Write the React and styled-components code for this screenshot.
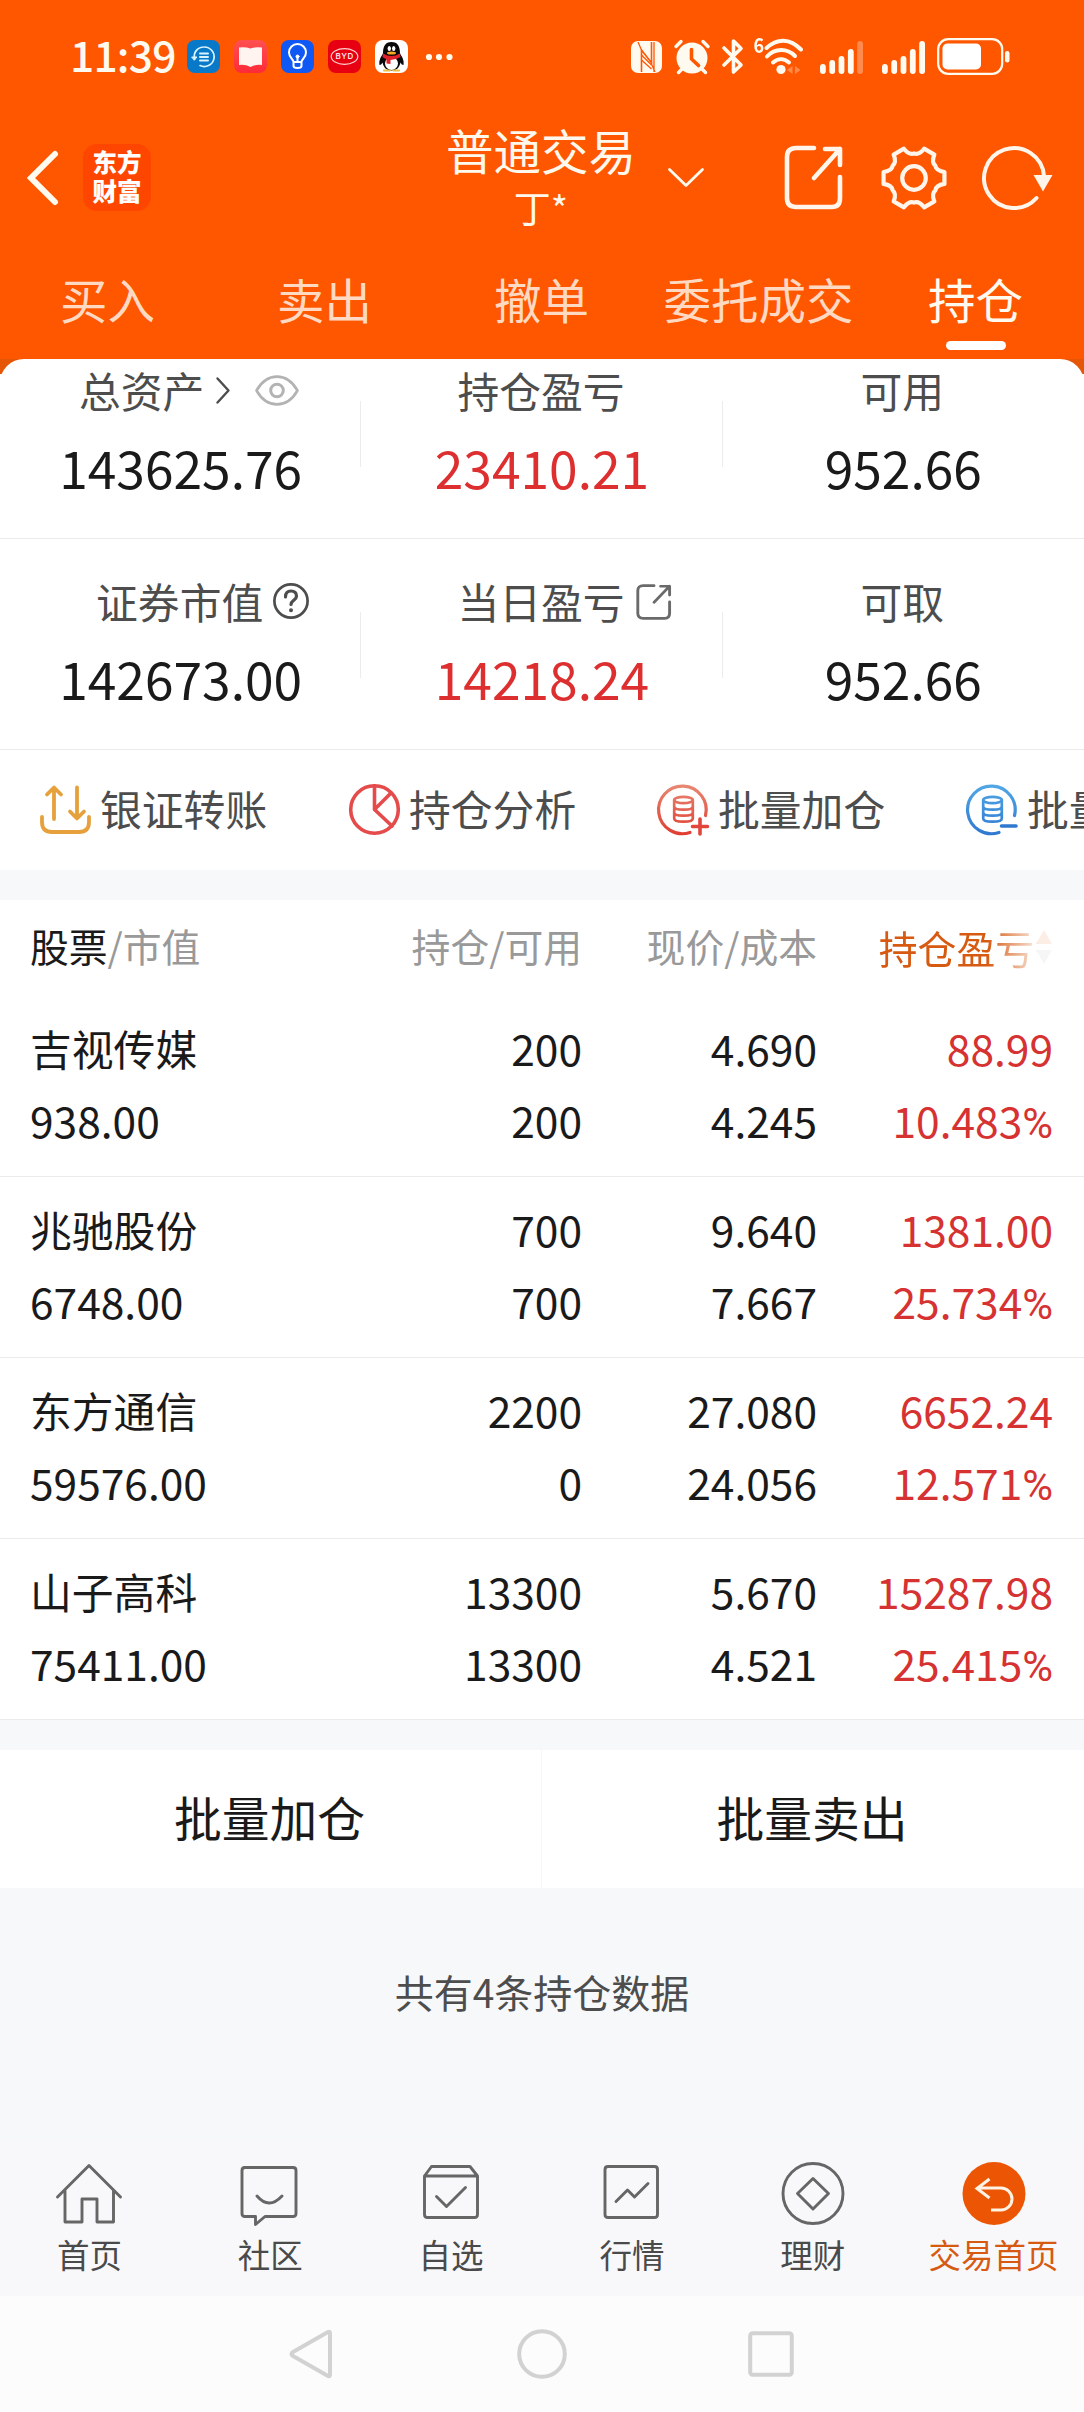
import React from "react";
import styled, { createGlobalStyle } from "styled-components";

const GlobalStyle = createGlobalStyle`
  * { box-sizing: border-box; }
  body {
    margin: 0;
    background: #f7f8fa;
    font-family: "Noto Sans CJK SC", "Noto Sans", sans-serif;
    color: #1a1a1a;
  }
`;

const Screen = styled.div`
  width: 1084px;
  height: 2412px;
  display: flex;
  flex-direction: column;
  overflow: hidden;
  background: #f7f8fa;
`;

const Icon = styled.svg`
  display: block;
  flex: none;
  width: ${(p) => p.$w}px;
  height: ${(p) => p.$h}px;
  margin-left: ${(p) => p.$ml || 0}px;
  overflow: visible;
  fill: none;
  stroke-linecap: round;
  stroke-linejoin: round;
`;

/* ---------- header ---------- */
const Header = styled.header`
  height: 359px;
  flex: none;
  background: #ff5600;
  color: #fffaf0;
`;

const StatusBar = styled.div`
  height: 112px;
  display: flex;
  align-items: center;
  padding: 1px 74px 0 70px;
`;

const Clock = styled.span`
  width: 117px;
  font-size: 42.5px;
  line-height: 50px;
  font-weight: 500;
  letter-spacing: -0.8px;
  white-space: nowrap;
  margin-top: -5px;
`;

const AppBadge = styled.span`
  width: 33px;
  height: 33px;
  flex: none;
  margin-right: 14px;
  border-radius: 8px;
  overflow: hidden;
  background: ${(p) => p.$bg};
`;

const StatusRight = styled.div`
  display: flex;
  align-items: center;
  margin-left: auto;
`;

const TitleBar = styled.div`
  height: 131px;
  display: grid;
  grid-template-columns: 440px 204px 1fr;
  align-items: center;
`;

const Brand = styled.div`
  display: flex;
  align-items: center;
  padding-left: 27px;
`;

const Logo = styled.div`
  width: 68px;
  height: 67px;
  margin-left: 25px;
  border-radius: 14px;
  background: #ff4600;
  display: flex;
  flex-direction: column;
  align-items: center;
  justify-content: center;
  color: #fff;
  font-size: 24.5px;
  line-height: 29.5px;
  font-weight: 900;
  padding-bottom: 3px;
`;

const Account = styled.div`
  text-align: center;
  color: #fff8ec;
  padding-right: 2px;
`;

const AccountType = styled.div`
  font-size: 47.5px;
  line-height: 60px;
  margin-top: -5px;
`;

const AccountName = styled.div`
  font-size: 37px;
  line-height: 48px;
  margin-top: 3px;
`;

const Tools = styled.div`
  display: flex;
  align-items: center;
  padding-left: 24px;
`;

const Tabs = styled.nav`
  height: 116px;
  display: grid;
  grid-template-columns: repeat(5, 1fr);
  margin-left: -1px;
`;

const Tab = styled.div`
  display: flex;
  flex-direction: column;
  align-items: center;
  padding-top: 24px;
  font-size: 47.5px;
  line-height: 64px;
  color: ${(p) => (p.$active ? "#fffaf0" : "#ffd9c2")};
  &::after {
    content: "";
    width: 60px;
    height: 9px;
    margin-top: 10px;
    border-radius: 5px;
    background: ${(p) => (p.$active ? "#fff" : "transparent")};
  }
`;

/* ---------- summary ---------- */
const SheetBackdrop = styled.div`
  flex: none;
  background: linear-gradient(#e65607 15px, #fff 15px);
`;

const Sheet = styled.section`
  background: #fff;
  border-radius: 24px 24px 0 0;
`;

const SummaryRow = styled.div`
  height: ${(p) => p.$height}px;
  display: grid;
  grid-template-columns: repeat(3, 1fr);
  align-items: end;
  border-bottom: 1px solid #ebebeb;
`;

const Stat = styled.div`
  height: 178px;
  padding-top: 1px;
  display: flex;
  flex-direction: column;
  align-items: center;
  background: ${(p) =>
    p.$last ? "none" : "linear-gradient(#ececec, #ececec) right 0 top 41px / 1px 66px no-repeat"};
`;

const StatLabel = styled.div`
  position: relative;
  display: flex;
  align-items: center;
  padding-left: ${(p) => p.$shift || 0}px;
  font-size: 41.8px;
  line-height: 58px;
  color: #4d4d4d;
  margin-left: -2px;
`;

const LabelAside = styled.span`
  position: absolute;
  left: 100%;
  top: ${(p) => p.$top}px;
`;

const StatValue = styled.div`
  margin-top: 15px;
  font-size: 51.5px;
  line-height: 66px;
  color: ${(p) => (p.$up ? "#dd2f2f" : "#1a1a1a")};
`;

const Shortcuts = styled.div`
  height: 120px;
  display: flex;
  overflow: hidden;
  padding-left: 40px;
`;

const Shortcut = styled.div`
  width: 309px;
  flex: none;
  display: flex;
  align-items: center;
  padding-bottom: 1px;
  font-size: 41.8px;
  line-height: 58px;
  color: #4d4d4d;
  white-space: nowrap;
  span { margin: -4px 0 0 9px; }
`;

/* ---------- holdings ---------- */
const Band = styled.div`
  height: ${(p) => p.$height}px;
  flex: none;
  background: #f7f8fa;
`;

const Holdings = styled.section`
  flex: none;
  background: #fff;
`;

const HeadRow = styled.div`
  height: 96px;
  display: grid;
  grid-template-columns: 253px 299px 235px 235px;
  padding: 0 32px 0 30px;
  line-height: 91px;
  font-size: 38.8px;
  color: #999;
`;

const HeadCell = styled.div`
  text-align: ${(p) => (p.$first ? "left" : "right")};
  white-space: nowrap;
  b { font-weight: 400; color: #1a1a1a; }
`;

const SortHead = styled.div`
  display: flex;
  align-items: center;
  justify-content: flex-end;
  height: 93px;
  line-height: 90px;
  color: #d65a12;
  mask-image: linear-gradient(to right, #000 170px, rgba(0, 0, 0, 0.1) 222px);
`;

const Holding = styled.div`
  height: 181px;
  display: grid;
  grid-template-columns: 253px 299px 235px 236px;
  grid-template-rows: 72px 72px;
  padding: 16px 31px 0 30px;
  border-bottom: 1px solid #ebebeb;
  line-height: 72px;
`;

const Cell = styled.div`
  text-align: ${(p) => (p.$left ? "left" : "right")};
  color: ${(p) => (p.$up ? "#d63232" : "#1a1a1a")};
  font-size: ${(p) => (p.$name ? 41.8 : 42.5)}px;
  white-space: nowrap;
`;

const Percent = styled.span`
  font-family: Roboto, sans-serif;
  font-size: 42px;
`;

const Batch = styled.div`
  height: 138px;
  flex: none;
  display: grid;
  grid-template-columns: 541px 543px;
  background: #fff;
`;

const BatchButton = styled.div`
  text-align: center;
  font-size: 47.8px;
  line-height: 133px;
  padding-right: 2px;
  & + & { border-left: 1px solid #f7f7f7; }
`;

const Summary = styled.p`
  margin: 0;
  height: 254px;
  flex: none;
  padding-top: 75px;
  text-align: center;
  font-size: 39px;
  line-height: 56px;
  color: #4d4d4d;
`;

/* ---------- bottom bars ---------- */
const BottomTabs = styled.nav`
  height: 154px;
  flex: none;
  display: grid;
  grid-template-columns: repeat(6, 1fr);
  background: #f8f8fa;
  margin-left: -1px;
`;

const BottomTab = styled.div`
  display: flex;
  flex-direction: column;
  align-items: center;
  padding-top: 20px;
  font-size: 32.5px;
  line-height: 44px;
  white-space: nowrap;
  color: ${(p) => (p.$active ? "#d65a12" : "#4a4a4a")};
  span { margin-top: 6px; }
`;

const SystemNav = styled.div`
  flex: 1;
  display: flex;
  align-items: center;
  padding: 0 0 0 289px;
  background: #fcfcfc;
`;

/* ---------- drawings ---------- */
const gearPath = (() => {
  const pt = (r, a) => {
    const t = (a * Math.PI) / 180;
    return `${(33 + r * Math.cos(t)).toFixed(2)} ${(32 + r * Math.sin(t)).toFixed(2)}`;
  };
  let d = "";
  for (let a = 0; a < 360; a += 60) {
    d += `${a ? "L" : "M"}${pt(31, a - 11)} L${pt(31, a + 11)} C${pt(25, a + 16)} ${pt(23.6, a + 22)} ${pt(24.6, a + 30)} C${pt(23.6, a + 38)} ${pt(25, a + 44)} ${pt(31, a + 49)} `;
  }
  return d + "Z";
})();

const Nfc = () => (
  <Icon $w={31} $h={32} viewBox="0 0 31 32">
    <rect width="31" height="32" rx="7" fill="#fffaf0" />
    <path d="M10.500 31V9L21 22.500M20.500 1v22" stroke="#ff5600" strokeWidth="1.600" strokeLinecap="butt" />
    <path d="M7 1l3.500 8M24 31l-3.500-8M10.500 14l10 10M10.500 19l10 9M23 1v30" stroke="#ff5600" strokeWidth="1.300" strokeLinecap="butt" />
  </Icon>
);

const Alarm = () => (
  <Icon $w={36} $h={34} $ml={12} viewBox="0 0 36 34">
    <circle cx="18" cy="18" r="15.500" fill="#fffaf0" />
    <path d="M2 6.500l5-5M34 6.500l-5-5M8 29l-3.500 3.500M28 29l3.500 3.500" stroke="#fffaf0" strokeWidth="3.400" />
    <path d="M17.500 9.500v9.500l7 6.500" stroke="#ff5600" strokeWidth="3.600" />
  </Icon>
);

const Bluetooth = () => (
  <Icon $w={22} $h={35} $ml={12} viewBox="0 0 22 35">
    <path d="M2 9l17 17-7.500 7V2L19 9.500 2 26" stroke="#fffaf0" strokeWidth="3.600" />
  </Icon>
);

const WifiLabel = styled.span`
  font-size: 20px;
  line-height: 20px;
  font-weight: 700;
  margin: -24px 0 0 9px;
  transform: scaleX(0.9);
`;

const Wifi = () => (
  <Icon $w={38} $h={35} viewBox="0 0 38 35">
    <path d="M1.500 9C12-1 25-1 36 10.500M2 17.500C10 9 22 9 30 17M8 23.500c5-4.500 11-4.500 16 0" stroke="#fffaf0" strokeWidth="4" />
    <circle cx="16" cy="30.500" r="4.600" fill="#fffaf0" />
    <path d="M27.500 27v8L22 31zM30 27v8l5.500-4z" fill="#ff8a4d" />
  </Icon>
);

const Signal = ({ bars, ml }) => (
  <Icon $w={43} $h={34} $ml={ml} viewBox="0 0 43 34">
    {[10, 14, 18, 25, 33].map((h, i) => (
      <rect key={h} x={i * 9.3} y={34 - h} width="5.800" height={h} rx="2.900" fill={i < bars ? "#fffaf0" : "#ff8a4d"} />
    ))}
  </Icon>
);

const Battery = () => (
  <Icon $w={73} $h={37} $ml={12} viewBox="0 0 73 37">
    <rect x="1.200" y="1.200" width="64" height="34.600" rx="10" stroke="#fffaf0" strokeWidth="2.200" />
    <rect x="5.500" y="5.500" width="38.500" height="26" rx="5" fill="#fff" />
    <rect x="68" y="13" width="4.500" height="11.500" rx="2.200" fill="#fffaf0" />
  </Icon>
);

const HistoryBadge = () => (
  <AppBadge $bg="#0878c8">
    <Icon $w={33} $h={33} viewBox="0 0 33 33" stroke="#d9f4ff">
      <path d="M7.500 19C6 12 11 7 17 7a9.800 9.800 0 1 1-4 18.600" strokeWidth="1.700" />
      <path d="M5 17l5 0-2.500 3z" fill="#d9f4ff" strokeWidth="1" />
      <path d="M13 13.500h8M13 17h8M13 20.500h8" strokeWidth="2" />
    </Icon>
  </AppBadge>
);

const BookBadge = () => (
  <AppBadge $bg="linear-gradient(#ff5050, #ff2a38)">
    <Icon $w={33} $h={33} viewBox="0 0 33 33">
      <path d="M5 7.500Q11 6.500 16.500 8.500 22 6.500 28 7.500V25q-6-1-11.500 2Q11 24 5 25z" fill="#fff4f0" />
    </Icon>
  </AppBadge>
);

const BulbBadge = () => (
  <AppBadge $bg="#1058f4">
    <Icon $w={33} $h={33} viewBox="0 0 33 33" stroke="#fff" strokeWidth="2">
      <path d="M12.500 22c0-3-4.500-4-4.500-9.500a8.500 8.500 0 0 1 17 0c0 5.500-4.500 6.500-4.500 9.500zM12.500 22v4q0 2 4 2t4-2v-4M16.500 17v5" />
      <circle cx="16.500" cy="16.500" r="1.500" fill="#fff" strokeWidth="1" />
    </Icon>
  </AppBadge>
);

const BydText = styled.text`
  font: 600 8px Inter, sans-serif;
  letter-spacing: 0.5px;
  fill: #ffe3e3;
`;

const BydBadge = () => (
  <AppBadge $bg="#e60012">
    <Icon $w={33} $h={33} viewBox="0 0 33 33">
      <ellipse cx="16.500" cy="16.500" rx="13.300" ry="7.800" stroke="#ffd0d0" strokeWidth="1.200" />
      <BydText x="16.700" y="19.400" textAnchor="middle">BYD</BydText>
    </Icon>
  </AppBadge>
);

const PenguinBadge = () => (
  <AppBadge $bg="#fff">
    <Icon $w={33} $h={33} viewBox="0 0 33 33">
      <path d="M8 14C4.500 18 4 22 4.500 25c1.500 0 2.500-1.500 3-2.500 1 5 4 8 9 8s8-3 9-8c.5 1 1.500 2.500 3 2.500 .5-3 0-7-3.500-11z" fill="#0a0a0a" />
      <path d="M8 13C8 5 11.500 2 16.500 2S25 5 25 13l1 4H7z" fill="#0a0a0a" />
      <ellipse cx="16.500" cy="23.500" rx="6.500" ry="6.500" fill="#fff" />
      <path d="M8 13.500q8.500 5 17 0l.5 3.500q-5 3-10 3v4l-4-.5v-4L7.500 17z" fill="#e0202a" />
      <ellipse cx="14.300" cy="8.500" rx="1.700" ry="2.500" fill="#fff" />
      <ellipse cx="18.700" cy="8.500" rx="1.700" ry="2.500" fill="#fff" />
      <ellipse cx="16.500" cy="13" rx="4.500" ry="1.500" fill="#f5a623" />
      <path d="M9 30.500h5.500M18.500 30.500H24" stroke="#f0c040" strokeWidth="2.200" />
    </Icon>
  </AppBadge>
);

const ShareOut = ({ w, h, ml, color, sw }) => (
  <Icon $w={w} $h={h} $ml={ml} viewBox="0 0 60 65" preserveAspectRatio="none" stroke={color} strokeWidth={sw}>
    <path d="M30 3H12Q3 3 3 12v41q0 9 9 9h36q8 0 8-9V32" />
    <path d="M41 4h15v16M56 4L30 33" />
  </Icon>
);

const Eye = () => (
  <Icon $w={44} $h={31} $ml={25} viewBox="0 0 44 31" stroke="#b3b3b3" strokeWidth="2.600">
    <path d="M1.500 15.500C12-3 32-3 42.500 15.500 32 34 12 34 1.500 15.500z" />
    <circle cx="22" cy="15.500" r="6.300" strokeWidth="3" />
  </Icon>
);

const Help = () => (
  <Icon $w={36} $h={36} $ml={10} viewBox="0 0 36 36" stroke="#4d4d4d" strokeWidth="2.700">
    <circle cx="18" cy="18" r="16.600" />
    <path d="M12.500 14q0-6 5.500-6t5.500 5.200c0 4-5.500 4.300-5.500 8.300" strokeWidth="3.200" />
    <circle cx="18" cy="27.200" r="1" fill="#4d4d4d" strokeWidth="2" />
  </Icon>
);

const Transfer = () => (
  <Icon $w={51} $h={50} viewBox="0 0 51 50" stroke="#e6a03c" strokeWidth="3.800">
    <path d="M2 32v5q0 10 10 10h27q10 0 10-10v-5" />
    <path d="M14 34V3M7 9.500L14 2.500l7 7M37 2.500V33M30 26.500l7 7 7-7" />
  </Icon>
);

const Pie = () => (
  <Icon $w={51} $h={51} viewBox="0 0 51 51" stroke="#e54b4b" strokeWidth="3.600">
    <circle cx="25.500" cy="25.500" r="23.800" />
    <path d="M25.500 2v23.500L42 9M25.500 25.500L43 42" />
  </Icon>
);

const Stack = ({ minus }) => {
  const id = minus ? "stackBlue" : "stackRed";
  return (
    <Icon $w={51} $h={51} viewBox="0 0 51 51" stroke={`url(#${id})`} strokeWidth="3.200">
      <defs>
        <linearGradient id={id} gradientUnits="userSpaceOnUse" x1="0" y1="0" x2="0" y2="51">
          <stop offset="0" stopColor={minus ? "#52a8e6" : "#e88a74"} />
          <stop offset="1" stopColor={minus ? "#2f78d0" : "#e03c30"} />
        </linearGradient>
      </defs>
      <path d="M47.500 31.500A23.800 23.800 0 1 0 32 48.400" />
      <ellipse cx="25.500" cy="16" rx="9.300" ry="3.200" strokeWidth="2.700" />
      <path d="M16.200 16v18.500q0 3.200 9.300 3.200t9.300-3.200V16M16.200 22.500q0 3.200 9.300 3.200t9.300-3.200M16.200 28.500q0 3.200 9.300 3.200t9.300-3.200" strokeWidth="2.700" />
      <path d={minus ? "M34.500 42H49" : "M34.500 42.500H49.500M42 35v15"} stroke={minus ? "#2f78d0" : "#e2453a"} strokeWidth="3.600" />
    </Icon>
  );
};

const SortArrows = () => (
  <Icon $w={16} $h={36} $ml={2} viewBox="0 0 16 36">
    <path d="M8 1l8 14H0z" fill="#e65500" />
    <path d="M8 35l8-14H0z" fill="#aaa" />
  </Icon>
);

const line = { stroke: "#666", strokeWidth: 2.9 };
const bottomItems = [
  ["首页", <path key="a" {...line} d="M1.500 35L33 3.500 64.500 35M9 28.500V60h17V37h15v23h16.500V28.500" />],
  ["社区", <path key="a" {...line} d="M7 5.500h49q3 0 3 3v43q0 3-3 3H28l-9.500 8v-8H8q-3 0-3-3v-43q0-3 3-3zM20 34q12 14 25 0" />],
  ["自选", <path key="a" {...line} d="M6.500 14l7-9.500h38.500l7.500 9.500v38.500q0 3-3 3h-47q-3 0-3-3zM6.500 14h53M18.500 34.500L28.500 44.500 47.500 25.500" />],
  ["行情", <path key="a" {...line} d="M9 4.500h46.500q3 0 3 3v45q0 3-3 3H9q-3 0-3-3v-45q0-3 3-3zM17 39.500L28.500 28l7 7L49 21.500" />],
  ["理财", <g key="a" {...line}><circle cx="33" cy="31.500" r="30" /><path d="M33 16.500l15.500 15L33 47 17.500 31.500z" /></g>],
  ["交易首页", <g key="a"><circle cx="33" cy="31.500" r="31.500" fill="#eb5503" /><path d="M28.500 17L16 26.500 28.500 36M16 26h24a11 11 0 0 1 0 22H30" stroke="#fff3e4" strokeWidth="3" strokeLinecap="butt" strokeLinejoin="miter" /></g>],
];

const holdings = [
  ["吉视传媒", "200", "4.690", "88.99", "938.00", "200", "4.245", "10.483"],
  ["兆驰股份", "700", "9.640", "1381.00", "6748.00", "700", "7.667", "25.734"],
  ["东方通信", "2200", "27.080", "6652.24", "59576.00", "0", "24.056", "12.571"],
  ["山子高科", "13300", "5.670", "15287.98", "75411.00", "13300", "4.521", "25.415"],
];

export default function App() {
  return (
    <Screen>
      <GlobalStyle />
      <Header>
        <StatusBar>
          <Clock>11:39</Clock>
          <HistoryBadge />
          <BookBadge />
          <BulbBadge />
          <BydBadge />
          <PenguinBadge />
          <Icon $w={28} $h={8} $ml={3} viewBox="0 0 28 8">
            <g fill="#fffaf0"><circle cx="4" cy="4" r="3.100" /><circle cx="14" cy="4" r="3.100" /><circle cx="24.500" cy="4" r="3.100" /></g>
          </Icon>
          <StatusRight>
            <Nfc />
            <Alarm />
            <Bluetooth />
            <WifiLabel>6</WifiLabel>
            <Wifi />
            <Signal bars={4} ml={17} />
            <Signal bars={5} ml={19} />
            <Battery />
          </StatusRight>
        </StatusBar>
        <TitleBar>
          <Brand>
            <Icon $w={31} $h={54} viewBox="0 0 31 54" stroke="#fffaf0" strokeWidth="6">
              <path d="M28 3L4 27l24 24" strokeLinejoin="miter" />
            </Icon>
            <Logo><span>东方</span><span>财富</span></Logo>
          </Brand>
          <Account>
            <AccountType>普通交易</AccountType>
            <AccountName>丁*</AccountName>
          </Account>
          <Tools>
            <Icon $w={36} $h={19} viewBox="0 0 36 19" stroke="#fffaf0" strokeWidth="2.800">
              <path d="M1.500 1.500L18 17.500 34.500 1.500" />
            </Icon>
            <ShareOut w={60} h={65} ml={80} color="#fff5ea" sw={4.6} />
            <Icon $w={66} $h={64} $ml={37} viewBox="0 0 66 64" stroke="#fff5ea" strokeWidth="4.200">
              <path d={gearPath} />
              <circle cx="33" cy="32" r="11.800" />
            </Icon>
            <Icon $w={71} $h={65} $ml={35} viewBox="0 0 71 65" stroke="#fff5ea" strokeWidth="4">
              <path d="M54.500 53A30 30 0 1 1 62 31" />
              <path d="M51.500 30h19L61 46.500z" fill="#fff5ea" stroke="none" />
            </Icon>
          </Tools>
        </TitleBar>
        <Tabs>
          <Tab>买入</Tab>
          <Tab>卖出</Tab>
          <Tab>撤单</Tab>
          <Tab>委托成交</Tab>
          <Tab $active>持仓</Tab>
        </Tabs>
      </Header>

      <SheetBackdrop>
        <Sheet>
          <SummaryRow $height={180}>
            <Stat>
              <StatLabel $shift={19}>
                总资产
                <Icon $w={14} $h={27} $ml={12} viewBox="0 0 14 27" stroke="#4d4d4d" strokeWidth="2.400">
                  <path d="M1.500 1.500L12.500 13.500 1.500 25.500" />
                </Icon>
                <Eye />
              </StatLabel>
              <StatValue>143625.76</StatValue>
            </Stat>
            <Stat>
              <StatLabel>持仓盈亏</StatLabel>
              <StatValue $up>23410.21</StatValue>
            </Stat>
            <Stat $last>
              <StatLabel>可用</StatLabel>
              <StatValue>952.66</StatValue>
            </Stat>
          </SummaryRow>
          <SummaryRow $height={211}>
            <Stat>
              <StatLabel>
                证券市值
                <LabelAside $top={11}><Help /></LabelAside>
              </StatLabel>
              <StatValue>142673.00</StatValue>
            </Stat>
            <Stat>
              <StatLabel>
                当日盈亏
                <LabelAside $top={12}><ShareOut w={36} h={36} ml={11} color="#6a6a6a" sw={4.8} /></LabelAside>
              </StatLabel>
              <StatValue $up>14218.24</StatValue>
            </Stat>
            <Stat $last>
              <StatLabel>可取</StatLabel>
              <StatValue>952.66</StatValue>
            </Stat>
          </SummaryRow>
          <Shortcuts>
            <Shortcut><Transfer /><span>银证转账</span></Shortcut>
            <Shortcut><Pie /><span>持仓分析</span></Shortcut>
            <Shortcut><Stack /><span>批量加仓</span></Shortcut>
            <Shortcut><Stack minus /><span>批量卖出</span></Shortcut>
          </Shortcuts>
        </Sheet>
      </SheetBackdrop>
      <Band $height={30} />

      <Holdings>
        <HeadRow>
          <HeadCell $first><b>股票</b>/市值</HeadCell>
          <HeadCell>持仓/可用</HeadCell>
          <HeadCell>现价/成本</HeadCell>
          <SortHead>持仓盈亏<SortArrows /></SortHead>
        </HeadRow>
        {holdings.map(([name, held, price, gain, value, free, cost, rate]) => (
          <Holding key={name}>
            <Cell $left $name>{name}</Cell>
            <Cell>{held}</Cell>
            <Cell>{price}</Cell>
            <Cell $up>{gain}</Cell>
            <Cell $left>{value}</Cell>
            <Cell>{free}</Cell>
            <Cell>{cost}</Cell>
            <Cell $up>{rate}<Percent>%</Percent></Cell>
          </Holding>
        ))}
      </Holdings>
      <Band $height={30} />

      <Batch>
        <BatchButton>批量加仓</BatchButton>
        <BatchButton>批量卖出</BatchButton>
      </Batch>
      <Summary>共有4条持仓数据</Summary>

      <BottomTabs>
        {bottomItems.map(([label, art], i) => (
          <BottomTab key={label} $active={i === 5}>
            <Icon $w={66} $h={64} viewBox="0 0 66 64">{art}</Icon>
            <span>{label}</span>
          </BottomTab>
        ))}
      </BottomTabs>
      <SystemNav>
        <Icon $w={43} $h={50} viewBox="0 0 43 50" stroke="#d2d2d2" strokeWidth="4">
          <path d="M39 3Q41 2 41 4.500v41Q41 48 39 47L4 27Q1 25 4 23z" />
        </Icon>
        <Icon $w={50} $h={50} $ml={185} viewBox="0 0 50 50" stroke="#d2d2d2" strokeWidth="4">
          <circle cx="25" cy="25" r="22.800" />
        </Icon>
        <Icon $w={46} $h={46} $ml={181} viewBox="0 0 46 46" stroke="#d2d2d2" strokeWidth="4">
          <rect x="2.200" y="2.200" width="41.600" height="41.600" rx="2.500" />
        </Icon>
      </SystemNav>
    </Screen>
  );
}
